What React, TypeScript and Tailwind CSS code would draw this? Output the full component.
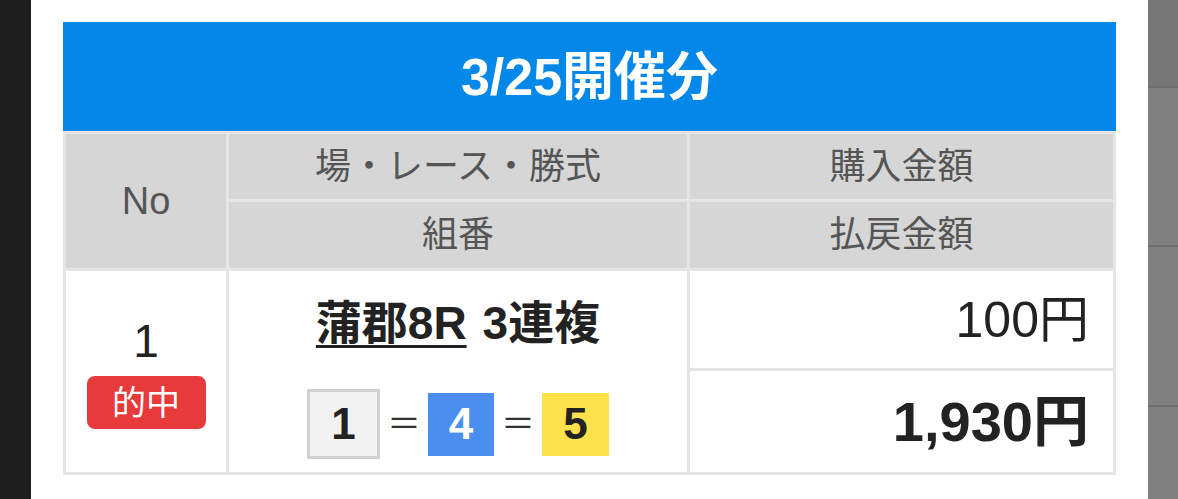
import React from 'react'

const font = { fontFamily: '"Liberation Sans", "Noto Sans CJK JP", sans-serif' }

function HeadCell({ children, className = '' }: { children: React.ReactNode; className?: string }) {
  return (
    <div className={`bg-[#d6d6d6] flex items-center justify-center text-[36px] text-[#555555] leading-none ${className}`}>
      {children}
    </div>
  )
}

export default function App() {
  return (
    <div className="flex w-[1178px] h-[499px] overflow-hidden" style={font}>
      <div className="w-[31px] bg-[#1e1e1e]" />
      <div className="flex-1 bg-white px-[32px] pt-[22px]">
        <div className="w-[1053px]">
          <div className="h-[109px] bg-[#0388e9] flex items-center justify-center text-white text-[52px] font-bold leading-none">
            3/25開催分
          </div>
          <div className="grid grid-cols-[160px_458px_423px] grid-rows-[65px_66px_97px_101px] gap-[3px] p-[3px] bg-[#e5e5e5]">
            <HeadCell className="row-span-2 text-[38px]">No</HeadCell>
            <HeadCell>場・レース・勝式</HeadCell>
            <HeadCell>購入金額</HeadCell>
            <HeadCell>組番</HeadCell>
            <HeadCell>払戻金額</HeadCell>

            <div className="row-start-3 row-span-2 col-start-1 bg-white flex flex-col items-center justify-center pt-[4px]">
              <div className="text-[46px] text-[#222] leading-none">1</div>
              <div className="mt-[12px] w-[119px] h-[53px] rounded-[8px] bg-[#e8393b] text-white text-[34px] leading-none flex items-center justify-center">
                的中
              </div>
            </div>

            <div className="row-start-3 row-span-2 col-start-2 bg-white flex flex-col items-center pt-[29px]">
              <div className="text-[46px] font-bold text-[#222] leading-none flex items-center gap-[16px]">
                <span className="underline underline-offset-[6px] decoration-[3px]">蒲郡8R</span>
                <span>3連複</span>
              </div>
              <div className="mt-[43px] flex items-center gap-[7px] text-[44px] font-bold leading-none text-[#222]">
                <div className="w-[73px] h-[70px] border-[3px] border-[#d0d0d0] bg-[#f2f2f2] flex items-center justify-center">1</div>
                <span className="text-[34px] font-normal text-[#333]">＝</span>
                <div className="w-[66px] h-[63px] bg-[#4a8ff0] text-white flex items-center justify-center">4</div>
                <span className="text-[34px] font-normal text-[#333]">＝</span>
                <div className="w-[67px] h-[63px] bg-[#fde14a] flex items-center justify-center">5</div>
              </div>
            </div>

            <div className="row-start-3 col-start-3 bg-white flex items-center justify-end pr-[24px] text-[50px] text-[#222] leading-none">
              100円
            </div>
            <div className="row-start-4 col-start-3 bg-white flex items-center justify-end pr-[24px] text-[56px] font-bold text-[#222] leading-none">
              1,930円
            </div>
          </div>
        </div>
      </div>
      <div className="w-[30px] flex flex-col bg-[#808080]">
        <div className="h-[86px] bg-[#777777]" />
        <div className="h-[2px] bg-[#6e6e6e]" />
        <div className="h-[157px]" />
        <div className="h-[2px] bg-[#6e6e6e]" />
        <div className="h-[158px]" />
        <div className="h-[2px] bg-[#6e6e6e]" />
      </div>
    </div>
  )
}
